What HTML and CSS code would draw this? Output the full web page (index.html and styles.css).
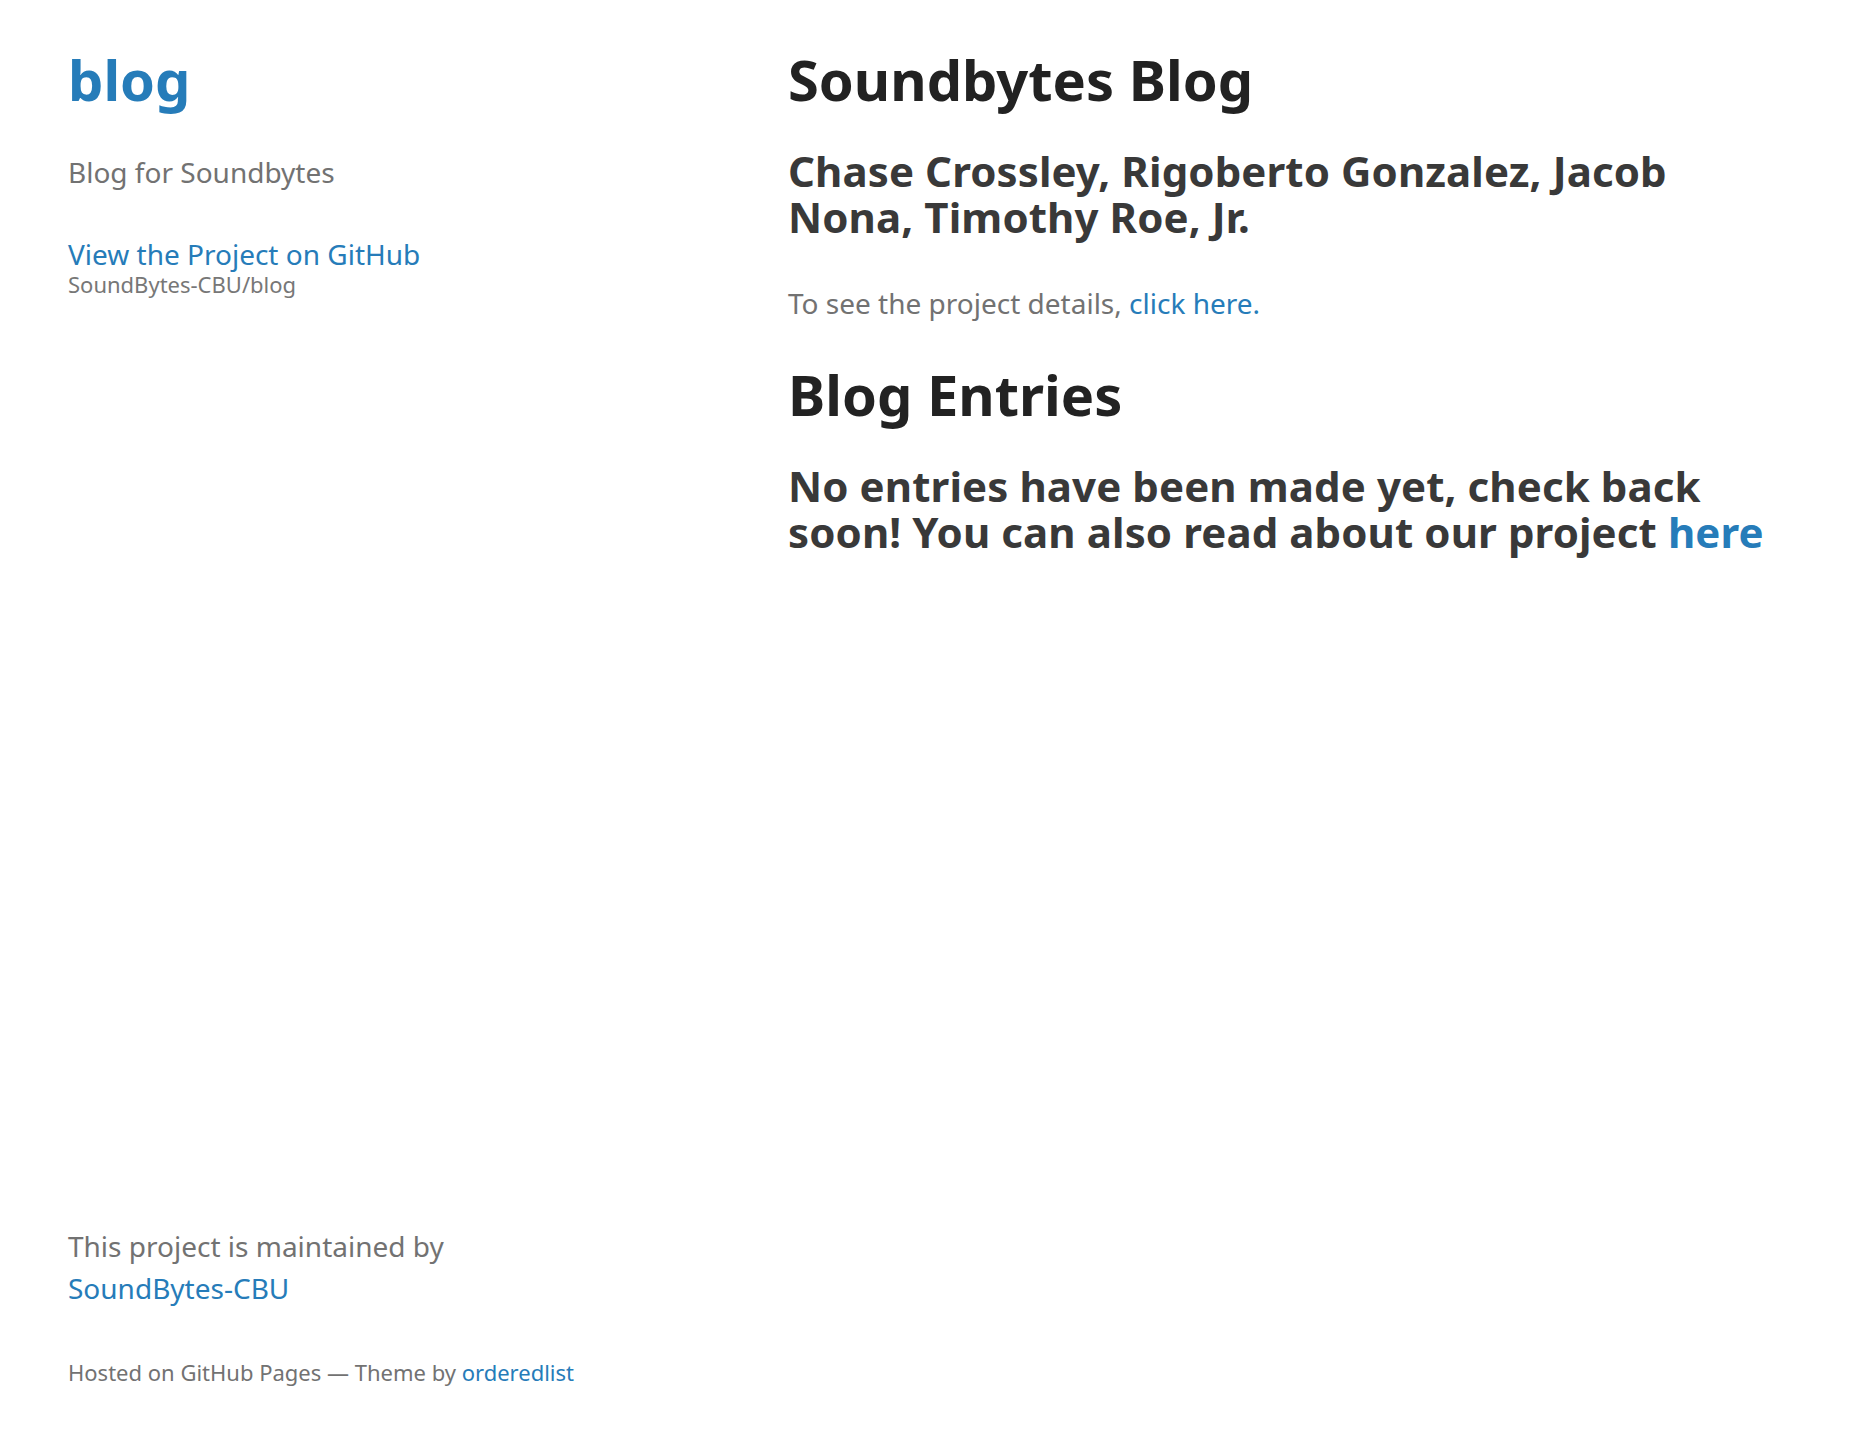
FILE: index.html
```html
<!DOCTYPE html>
<html lang="en-US">
<head>
<meta charset="UTF-8">
<title>Soundbytes Blog | blog</title>
<link rel="stylesheet" href="styles.css">
</head>
<body>
<div class="wrapper">
  <aside class="side">
    <header class="site-header">
      <h1 class="site-title"><a href="#">blog</a></h1>
      <p>Blog for Soundbytes</p>
      <p class="view"><a href="#">View the Project on GitHub <small>SoundBytes-CBU/blog</small></a></p>
    </header>
    <footer class="site-footer">
      <p>This project is maintained by <a href="#">SoundBytes-CBU</a></p>
      <p class="hosted"><small>Hosted on GitHub Pages &mdash; Theme by <a href="#">orderedlist</a></small></p>
    </footer>
  </aside>
  <section class="content">
    <h1>Soundbytes Blog</h1>
    <h2>Chase Crossley, Rigoberto Gonzalez, Jacob Nona, Timothy Roe, Jr.</h2>
    <p>To see the project details, <a href="#">click here.</a></p>
    <h1>Blog Entries</h1>
    <h2>No entries have been made yet, check back soon! You can also read about our project <a href="#">here</a></h2>
  </section>
</div>
</body>
</html>
```
FILE: styles.css
```css
html, body {
  margin: 0;
  padding: 0;
  background: #fff;
}

body {
  font-family: "Noto Sans", "Open Sans", "Liberation Sans", sans-serif;
  font-size: 28px;
  line-height: 1.5;
  color: #727272;
  font-weight: 400;
}

a {
  color: #267CB9;
  text-decoration: none;
}

h1, h2 {
  margin: 0 0 40px;
  line-height: 1.1;
  font-weight: 700;
}

h1 {
  font-size: 56px;
  color: #222;
}

h2 {
  font-size: 42px;
  color: #393939;
  letter-spacing: 0.1px;
}

p {
  margin: 0 0 40px;
}

.wrapper {
  width: 1720px;
  margin: 0 auto;
  display: flex;
  justify-content: space-between;
  align-items: flex-start;
}

.side {
  width: 540px;
  min-height: 100vh;
  box-sizing: border-box;
  padding: 49px 0 59px;
  display: flex;
  flex-direction: column;
  justify-content: space-between;
}

.site-title a {
  color: #267CB9;
}

.view small {
  display: block;
  font-size: 22px;
  margin-top: -0.3em;
  color: #777;
}

.site-footer p:last-child {
  margin-bottom: 0;
}

.hosted small {
  font-size: 22px;
}

.content {
  width: 1000px;
  padding: 49px 0 100px;
}

.content h1 {
  margin-bottom: 37px;
}

.content h2 {
  margin-bottom: 42px;
}
```
